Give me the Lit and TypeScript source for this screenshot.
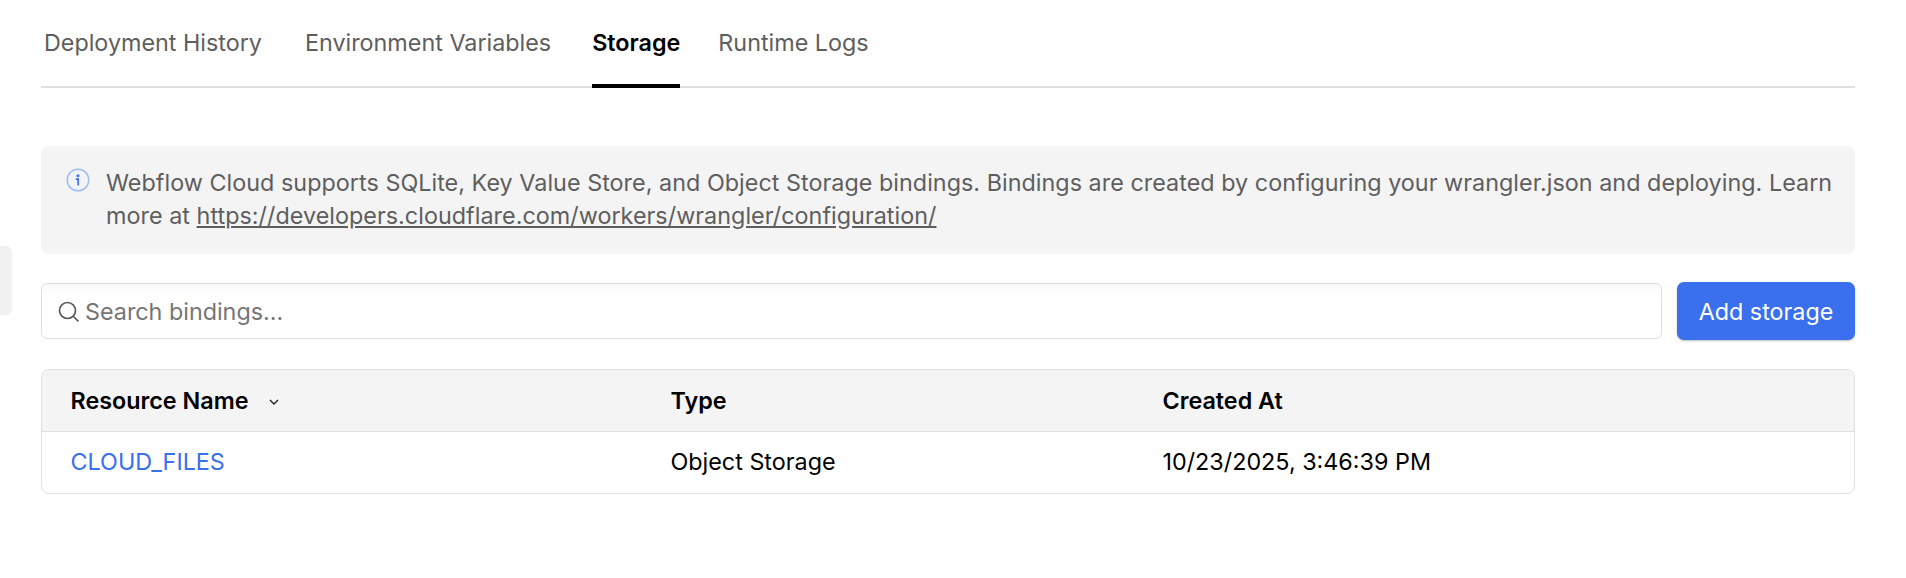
import { LitElement, html, css } from "lit";
import { customElement } from "lit/decorators.js";

@customElement("app-root")
export class AppRoot extends LitElement {
  static styles = css`
    :host { display: block; height: 578px; position: relative; font-family: Inter, sans-serif; font-size: 23.33px; color: #000; overflow: hidden; background: #fff; }
    .wrap { padding: 0 51px 0 41px; }
    .tabs { display: flex; height: 88px; border-bottom: 2px solid #dfdfdf; box-sizing: border-box; padding-left: 3px; }
    .tab { height: 88px; box-sizing: border-box; display: flex; align-items: center; padding-bottom: 3px; color: #5e5e5e; margin-right: 43px; }
    .tab.env { margin-right: 41px; }
    .tab.on { color: #000; font-weight: 600; border-bottom: 4px solid #000; padding-bottom: 0; margin-right: 38px; }
    .info { margin-top: 58px; background: #f4f4f4; border-radius: 8px; height: 108px; box-sizing: border-box; padding: 20px 20px 0 25px; display: flex; gap: 16px; color: #5e5e5e; line-height: 33px; letter-spacing: .035px; }
    .info svg { flex: none; margin-top: 2px; }
    .info a { color: #5e5e5e; text-decoration: underline; }
    .row { margin-top: 28px; display: flex; gap: 15px; align-items: center; }
    .search { flex: 1; height: 56px; border: 1px solid #dedede; border-radius: 6px; box-sizing: border-box; display: flex; align-items: center; gap: 6px; padding-left: 16px; color: #757575; background: linear-gradient(#fafafa, #fff 14px); }
    .btn { width: 178px; height: 58px; background: #3a70ee; color: #fff; border-radius: 7px; display: flex; align-items: center; justify-content: center; box-shadow: 0 1px 2px rgba(0,0,0,.25); }
    .table { margin-top: 29px; border: 1px solid #e0e0e0; border-radius: 8px; overflow: hidden; }
    .tr { display: grid; grid-template-columns: 600px 492px 1fr; height: 61px; box-sizing: border-box; padding-bottom: 2px; align-items: center; padding-left: 28.5px; }
    .head { background: #f4f4f4; font-weight: 600; border-bottom: 1px solid #e0e0e0; height: 62px; padding-bottom: 1px; }
    .sort { display: inline-flex; align-items: center; gap: 21px; }
    .sort svg { margin-top: 4px; }
    .link { color: #3a70ee; }
    .tag { position: absolute; left: 0; top: 246px; width: 12px; height: 69px; background: #f1f1f1; border-radius: 0 6px 6px 0; }
  `;
  render() {
    return html`
      <div class="tag"></div>
      <div class="wrap">
        <div class="tabs">
          <div class="tab">Deployment History</div>
          <div class="tab env">Environment Variables</div>
          <div class="tab on">Storage</div>
          <div class="tab">Runtime Logs</div>
        </div>
        <div class="info">
          <svg width="24" height="24" viewBox="0 0 24 24" fill="none"><circle cx="12" cy="12" r="10.8" stroke="#a3bdf6" stroke-width="1.5"/><circle cx="12" cy="7.8" r="1.5" fill="#3a70ee"/><path d="M9.8 11.2h2.4v6.3" stroke="#3a70ee" stroke-width="1.7"/></svg>
          <div>Webflow Cloud supports SQLite, Key Value Store, and Object Storage bindings. Bindings are created by configuring your wrangler.json and deploying. Learn more at <a>https://developers.cloudflare.com/workers/wrangler/configuration/</a></div>
        </div>
        <div class="row">
          <div class="search">
            <svg width="21" height="21" viewBox="0 0 21 21" fill="none" stroke="#555" stroke-width="1.6"><circle cx="9.5" cy="9.5" r="8"/><path d="M15.2 15.2 20.4 20.4"/></svg>
            Search bindings...
          </div>
          <div class="btn">Add storage</div>
        </div>
        <div class="table">
          <div class="tr head">
            <div class="sort">Resource Name <svg width="10" height="6" viewBox="0 0 10 6" fill="none" stroke="#222" stroke-width="1.4"><path d="M1 1l4 4 4-4"/></svg></div>
            <div>Type</div>
            <div>Created At</div>
          </div>
          <div class="tr">
            <div class="link">CLOUD_FILES</div>
            <div>Object Storage</div>
            <div>10/23/2025, 3:46:39 PM</div>
          </div>
        </div>
      </div>
    `;
  }
}
